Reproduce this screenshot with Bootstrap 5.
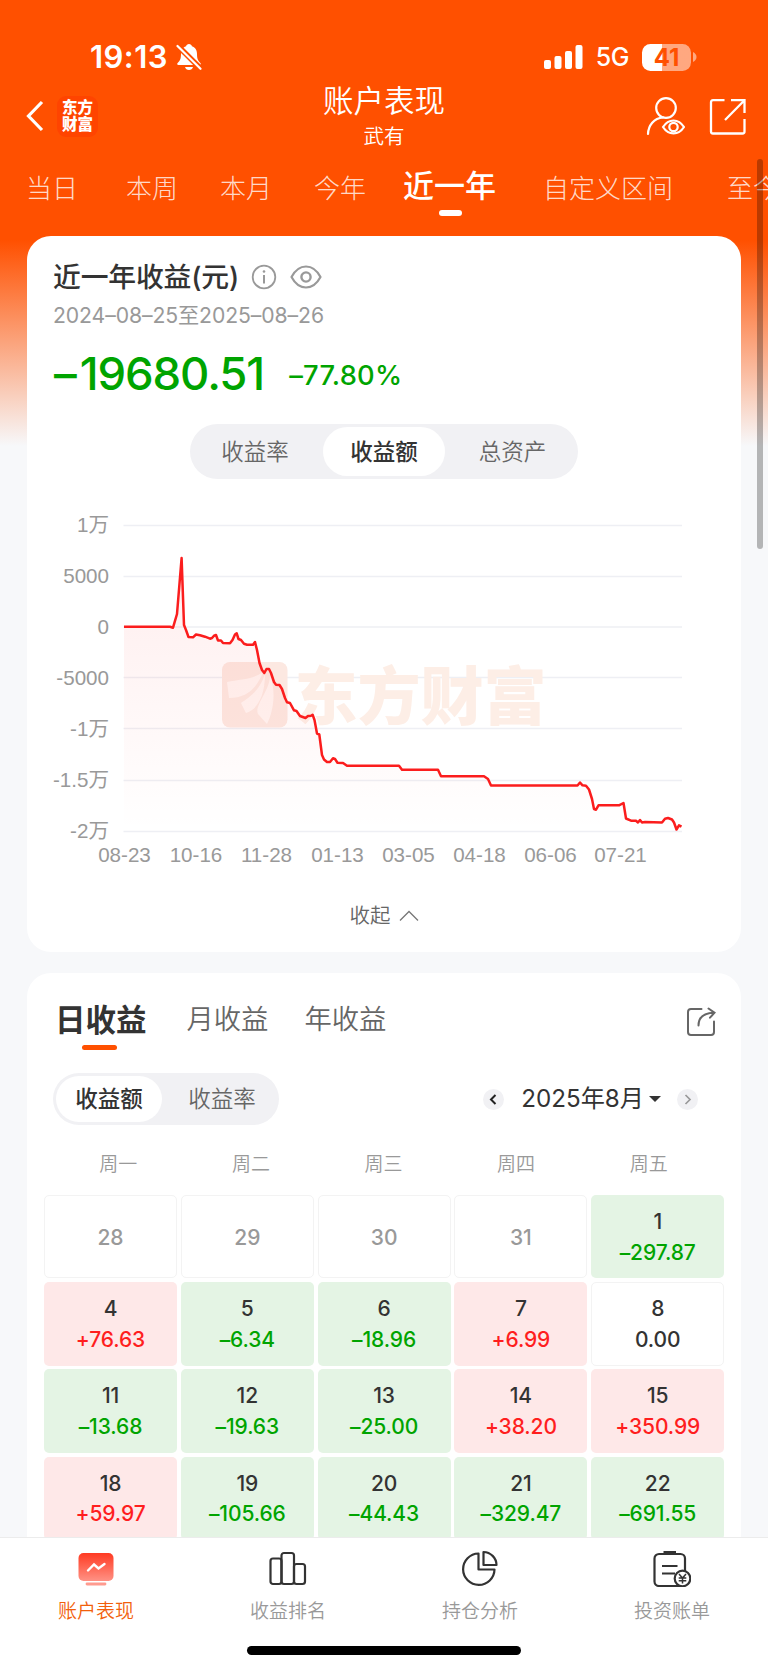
<!DOCTYPE html>
<html lang="zh-CN">
<head>
<meta charset="utf-8">
<meta name="viewport" content="width=device-width, initial-scale=1">
<title>账户表现</title>
<link href="https://cdn.jsdelivr.net/npm/bootstrap@5.3.0/dist/css/bootstrap.min.css" rel="stylesheet">
<style>
:root{--brand:#ff5000;--ink:#333;--mid:#666;--soft:#999;--up:#ff1e1e;--down:#00a400}
body{font-family:Inter,"Noto Sans CJK SC",sans-serif;color:var(--ink);background:#f7f8fa;font-weight:350}
svg{display:block;flex:none}
.app{width:768px;height:1669px;background:linear-gradient(#ff5000 0,#ff5000 240px,#f7f8fa 446px)}
.status{height:80px;padding:34px 71px 0 90px}
.clock{font-size:31px;font-weight:600;line-height:46px;letter-spacing:.45px}
.net{font-size:25px;font-weight:450;line-height:46px;letter-spacing:-.4px}
.batt{width:49px;height:27px;border-radius:8.5px;background:linear-gradient(90deg,#fff 41%,rgba(255,255,255,.5) 41%);color:var(--brand);font-size:24px;font-weight:700;line-height:27px}
.topbar{height:72px;padding:0 22px 0 25px}
.logo{width:41px;height:41px;border-radius:9px;background:#ff4400;font-size:15.5px;line-height:17.2px;font-weight:900;margin-left:13px}
.ttl{font-size:30.5px;line-height:38px;font-weight:350}
.sub{font-size:20.5px;line-height:26px;margin-top:4px}
.ranges{height:84px;padding-left:26px;font-size:26px;line-height:74px;color:rgba(255,255,255,.8);font-weight:300}
.ranges .on{color:#fff;font-size:31px;font-weight:500;line-height:67px}
.ranges .on::after{content:"";position:absolute;left:36px;top:58px;width:23px;height:6px;border-radius:3px;background:#fff}
.panel{margin:0 27px;background:#fff;border-radius:24px}
.p1{height:716px;padding:22px 26px 0}
.h-main{font-size:27.8px;line-height:38px;font-weight:500;letter-spacing:-.15px}
.dates{font-size:21.2px;line-height:30px;color:var(--soft);margin-top:4px;font-weight:400;letter-spacing:-.1px}
.big{font-size:45.5px;line-height:56px;font-weight:500;letter-spacing:-1.1px;margin-left:1px}
.big i{font-style:normal;margin-right:4px}
.pct{font-size:27.3px;line-height:60px;font-weight:450;margin-left:25px;letter-spacing:.25px}
.seg{background:#f1f1f4;border-radius:28px;padding:3px;font-size:22.5px;color:var(--mid)}
.seg span{text-align:center;border-radius:25px}
.seg .on{background:#fff;color:var(--ink);font-weight:500}
.seg1{width:388px;height:55px;margin:18px auto 0;line-height:49px}
.seg1 span{width:130px}.seg1 .on{width:122px}
.seg1 span:first-child{padding-right:6px}.seg1 span:last-child{padding-left:5px}
.seg2{width:226px;height:52px;line-height:45px}
.seg2 .on{width:106px}.seg2 .off{width:114px;padding-left:6px}
.axis{font:20.6px "Liberation Sans","Noto Sans CJK SC",sans-serif;fill:#999}
.wm{font:900 63px "Noto Sans CJK SC",sans-serif;fill:#fdeee6}
.fold{font-size:20.5px;line-height:30px;color:var(--mid);margin-top:6px}
.p2{margin-top:21px;height:800px;padding:0 17px}
.kinds{height:100px;padding:0 8px 6px 11px;line-height:94px;font-size:27.3px;color:var(--mid)}
.kinds .on{font-size:30.5px;font-weight:700;color:var(--ink)}
.kinds .on::after{content:"";position:absolute;left:27px;top:72px;width:35px;height:5px;border-radius:3px;background:var(--brand)}
.ctrl{padding:0 26px 0 9px;height:52px}
.rnd{width:21px;height:21px;border-radius:50%;background:#f1f1f4}
.month{font-size:24.2px;line-height:52px;margin-left:17px;font-weight:370}
.caret{border:6px solid transparent;border-top-color:var(--ink);border-bottom:0;margin:0 16px 0 5px}
.week{padding:0 9px 0 8px;height:70px;line-height:79px;font-size:19px;color:var(--soft);text-align:center}
.days{display:grid;grid-template-columns:repeat(5,133px);gap:3.8px;grid-auto-rows:83.4px;font-size:21px;font-weight:500}
.day{border-radius:5px;text-align:center;padding-top:12px;line-height:30.5px;letter-spacing:-.1px}
.day b{display:block;font-weight:500}
.out{border:1px solid #f3f3f3;line-height:59px;color:var(--soft)}
.zero{border:1px solid #f3f3f3;padding-top:11px}
.gain{background:#fee8e8}.gain b{color:var(--up)}
.loss{background:#e4f4e4}.loss b{color:var(--down)}
.tabs{height:132px;background:#fff;border-top:1px solid #ececec;width:768px}
.tabs .item{width:192px;padding-top:11px;font-size:19px;line-height:28px;color:var(--soft)}
.tabs .item svg{margin:0 auto 11px}
.tabs .on{color:#f25f0c}
.homebar{width:274px;height:9px;border-radius:5px;background:#000;bottom:14px;left:247px}
.scroller{left:757px;top:159px;width:6px;height:390px;border-radius:3px;background:rgba(0,0,0,.27)}
</style>
</head>
<body>
<div class="app position-relative overflow-hidden">
  <header class="text-white">
    <div class="status d-flex align-items-center">
      <span class="clock">19:13</span>
      <svg class="ms-2" width="26" height="28" viewBox="0 0 26 28"><path fill="#fff" d="M13 1c-1.600 0-2.600 1-2.900 2.200C6.500 4.400 5 7.500 5 11c0 6-1.600 7-3.600 9.300-.5.900 0 1.700 1 1.700h21.200c1 0 1.500-.8 1-1.700C22.600 18 21 17 21 11c0-3.500-1.500-6.600-5.100-7.800C15.600 2 14.600 1 13 1zM9 24h8c-.5 2-2 3-4 3s-3.500-1-4-3z"/><path d="M0 1L26 27" stroke="#ff5000" stroke-width="5.500"/><path d="M1.500 3L24.500 25.800" stroke="#fff" stroke-width="2.200" stroke-linecap="round"/></svg>
      <svg class="ms-auto" width="39" height="26" viewBox="0 0 39 26" fill="#fff"><rect y="16" width="7" height="9" rx="2"/><rect x="10.500" y="12" width="7" height="13" rx="2"/><rect x="21" y="7" width="7" height="18" rx="2"/><rect x="31.500" y="1" width="7" height="24" rx="2"/></svg>
      <span class="net" style="margin-left:13px">5G</span>
      <span class="batt text-center" style="margin-left:13px">41</span>
      <svg style="margin-left:2px" width="4" height="10"><path d="M0 0Q3.500 2 3.500 5T0 10z" fill="#fff" opacity=".5"/></svg>
    </div>
    <div class="topbar d-flex align-items-center position-relative">
      <svg width="19" height="32" viewBox="0 0 19 32"><path d="M17 2L3.500 16 17 30" fill="none" stroke="#fff" stroke-width="3.200"/></svg>
      <div class="logo text-center d-flex flex-column justify-content-center"><span>东方</span><span>财富</span></div>
      <div class="position-absolute start-50 translate-middle-x top-0 text-center pt-1 text-nowrap" style="margin-top:-2px">
        <div class="ttl">账户表现</div><div class="sub">武有</div>
      </div>
      <svg class="ms-auto" width="40" height="40" viewBox="0 0 40 40" fill="none" stroke="#fff" stroke-width="2.200"><circle cx="21" cy="12" r="9.800"/><path d="M3 38C3.300 29.500 9 22.200 18 21.300" stroke-linecap="round"/><path d="M18 31C23.500 22.300 33.500 22.300 39 31 33.500 39.600 23.500 39.600 18 31z"/><circle cx="28.500" cy="31" r="4.200"/></svg>
      <svg style="margin-left:24px" width="37" height="37" viewBox="0 0 37 37" fill="none" stroke="#fff" stroke-width="2.300"><path d="M15.500 2.200H4Q2 2.200 2 4.200V33.500Q2 35.500 4 35.500H33.500Q35.500 35.500 35.500 33.500V21M22 2.200H35.500V15M35 2.700L16 22"/></svg>
    </div>
    <nav class="ranges d-flex text-nowrap">
      <span>当日</span><span style="margin-left:48px">本周</span><span style="margin-left:42px">本月</span><span style="margin-left:42px">今年</span><span class="on position-relative" style="margin-left:37px">近一年</span><span style="margin-left:47px">自定义区间</span><span style="margin-left:54px">至今</span>
    </nav>
  </header>

  <section class="panel p1">
    <div class="d-flex align-items-center">
      <span class="h-main">近一年收益(元)</span>
      <svg style="margin-left:12px" width="26" height="26" viewBox="0 0 26 26" fill="none" stroke="#999" stroke-width="1.800"><circle cx="13" cy="13" r="11.300"/><path d="M13 11v8.500" stroke-width="2"/><circle cx="13" cy="7.500" r="1.300" fill="#999" stroke="none"/></svg>
      <svg style="margin-left:13px" width="32" height="26" viewBox="0 0 32 26" fill="none" stroke="#999" stroke-width="2.200"><path d="M1.500 13C9 -1 23 -1 30.500 13 23 27 9 27 1.500 13z" stroke-linejoin="round"/><circle cx="16" cy="13" r="4.600" stroke-width="2.400"/></svg>
    </div>
    <div class="dates">2024–08–25至2025–08–26</div>
    <div class="d-flex" style="color:var(--down);margin-top:16px"><span class="big"><i>–</i>19680.51</span><span class="pct">–77.80%</span></div>
    <div class="seg seg1 d-flex"><span>收益率</span><span class="on">收益额</span><span>总资产</span></div>
    <svg style="margin:16px 0 0 -13px" width="660" height="400" viewBox="40 495 660 400">
      <defs>
        <linearGradient id="fade" x1="0" y1="620" x2="0" y2="831" gradientUnits="userSpaceOnUse"><stop stop-color="#ff1e1e" stop-opacity=".06"/><stop offset="1" stop-color="#ff1e1e" stop-opacity="0"/></linearGradient>
      </defs>
      <path d="M123.500 525.500H682M123.500 576.500H682M123.500 627H682M123.500 677.500H682M123.500 728.500H682M123.500 780.500H682M123.500 831.500H682" stroke="#eeeff4" stroke-width="1.300"/>
      <rect x="222" y="662" width="65.500" height="65.500" rx="8" fill="#fce8e1"/>
      <path fill="#fff5f2" d="M227 682C240 679 252 680 263 672 257 688 247 698 229 698zM265 674C259 692 248 698 241 703L246 713C256 710 265 698 265 674zM270 676C270 690 254 706 258 714L267 724C274 710 276 690 270 676z"/>
      <text class="wm" x="294.500" y="718.500">东方财富</text>
      <path id="area" fill="url(#fade)"/>
      <path id="line" fill="none" stroke="#fb1d1d" stroke-width="2.500" stroke-linejoin="round"/>
      <g class="axis" text-anchor="end"><text x="109" y="531.500">1万</text><text x="109" y="582.500">5000</text><text x="109" y="633.500">0</text><text x="109" y="684.500">-5000</text><text x="109" y="735.500">-1万</text><text x="109" y="786.500">-1.5万</text><text x="109" y="837.500">-2万</text></g>
      <g class="axis" text-anchor="middle"><text x="124.500" y="862">08-23</text><text x="196" y="862">10-16</text><text x="266.500" y="862">11-28</text><text x="337.500" y="862">01-13</text><text x="408.500" y="862">03-05</text><text x="479.500" y="862">04-18</text><text x="550.500" y="862">06-06</text><text x="620.500" y="862">07-21</text></g>
    </svg>
    <div class="fold d-flex justify-content-center align-items-center">收起<svg style="margin-left:8px" width="20" height="12" viewBox="0 0 20 12"><path d="M1 10.500L10 1.500 19 10.500" fill="none" stroke="#777" stroke-width="1.300"/></svg></div>
  </section>

  <section class="panel p2">
    <div class="kinds d-flex align-items-center"><span class="on position-relative">日收益</span><span style="margin-left:40px">月收益</span><span style="margin-left:36px">年收益</span>
      <svg class="ms-auto" style="margin-top:3px" width="30" height="30" viewBox="0 0 30 30" fill="none" stroke="#666" stroke-width="2" stroke-linecap="round"><path d="M15.500 2H5Q2 2 2 5V25Q2 28 5 28H25Q28 28 28 25V14.500M12.500 18.500C12.500 10 18 6 28 5.700M22.500 1.500L28.500 5.700 24 10.700"/></svg>
    </div>
    <div class="ctrl d-flex align-items-center">
      <div class="seg seg2 d-flex"><span class="on">收益额</span><span class="off">收益率</span></div>
      <span class="rnd ms-auto"><svg width="21" height="21"><path d="M12.500 6L8 10.500l4.500 4.500" fill="none" stroke="#222" stroke-width="2"/></svg></span>
      <span class="month">2025年8月</span><span class="caret"></span>
      <span class="rnd"><svg width="21" height="21"><path d="M8.500 6l4.500 4.500L8.500 15" fill="none" stroke="#999" stroke-width="1.700"/></svg></span>
    </div>
    <div class="week d-flex"><span class="col">周一</span><span class="col">周二</span><span class="col">周三</span><span class="col">周四</span><span class="col">周五</span></div>
    <div class="days">
      <div class="day out">28</div><div class="day out">29</div><div class="day out">30</div><div class="day out">31</div><div class="day loss">1<b>–297.87</b></div>
      <div class="day gain">4<b>+76.63</b></div><div class="day loss">5<b>–6.34</b></div><div class="day loss">6<b>–18.96</b></div><div class="day gain">7<b>+6.99</b></div><div class="day zero">8<b>0.00</b></div>
      <div class="day loss">11<b>–13.68</b></div><div class="day loss">12<b>–19.63</b></div><div class="day loss">13<b>–25.00</b></div><div class="day gain">14<b>+38.20</b></div><div class="day gain">15<b>+350.99</b></div>
      <div class="day gain">18<b>+59.97</b></div><div class="day loss">19<b>–105.66</b></div><div class="day loss">20<b>–44.43</b></div><div class="day loss">21<b>–329.47</b></div><div class="day loss">22<b>–691.55</b></div>
    </div>
  </section>

  <nav class="tabs d-flex text-center position-absolute bottom-0 start-0">
    <div class="item on"><svg width="38" height="38" viewBox="0 0 38 38"><defs><linearGradient id="scr" x2="0" y2="1"><stop stop-color="#ff3a22"/><stop offset="1" stop-color="#ff9285"/></linearGradient></defs><rect x="1.500" y="4" width="35" height="28" rx="5" fill="url(#scr)"/><path d="M11 21.500L17 15.500 21.500 19.500 27.500 15" fill="none" stroke="#fff" stroke-width="2.400" stroke-linecap="round"/><path d="M10 35H28" stroke="#ff9b8f" stroke-width="2.800" stroke-linecap="round"/></svg>账户表现</div>
    <div class="item"><svg width="38" height="38" viewBox="0 0 38 38" fill="none" stroke="#333" stroke-width="2.200"><rect x="1.500" y="9.500" width="11" height="25.500" rx="2.500"/><rect x="12.500" y="4" width="12.500" height="31" rx="2.500"/><rect x="25" y="15" width="11" height="20" rx="2.500"/></svg>收益排名</div>
    <div class="item"><svg width="38" height="38" viewBox="0 0 38 38" fill="none" stroke="#333" stroke-width="2.200" stroke-linejoin="round"><path d="M17.500 4.500V20.500H33.500A15.700 15.700 0 1 1 17.500 4.500z"/><path d="M22.500 3V16H35.500A13.200 13.200 0 0 0 22.500 3z"/></svg>持仓分析</div>
    <div class="item"><svg width="38" height="38" viewBox="0 0 38 38" fill="none" stroke="#333" stroke-width="2.200"><rect x="1.500" y="5" width="30.500" height="32" rx="4.500"/><path d="M10.500 3.500H23" stroke-width="3"/><path d="M9 17H24.500M9 24.500H22" stroke-width="2"/><circle cx="29.500" cy="29.500" r="7.800" fill="#fff"/><path d="M26 25l3.500 4 3.500-4M29.500 29v5.500M25.700 29h7.600M25.700 31.800h7.600" stroke-width="1.500"/></svg>投资账单</div>
    <div class="homebar position-absolute"></div>
  </nav>
  <div class="scroller position-absolute"></div>
</div>
<script src="https://cdn.jsdelivr.net/npm/bootstrap@5.3.0/dist/js/bootstrap.bundle.min.js"></script>
<script>
// Cumulative profit curve, in chart coordinates
const pts = [[124,626.7],[170,626.7],[173,627.7],[177,614],[181.600,558],[184,625],[186,630],[188.500,637],[193,637.300],[196,634.500],[200,635.300],[205,636.700],[210,638.700],[212,638],[214,635.700],[216,635],[218,640.500],[221,640.500],[223,643],[230,643.300],[232.500,640],[235,634.500],[236.700,633.300],[238.500,639],[241,640],[244,643.700],[247,644.700],[253,644.700],[255,642],[257,650],[259.500,663],[262,670],[264.300,673],[266.500,669],[269,669],[271,673],[274,682],[276,684.700],[279.500,685],[282,689],[285,698],[287,702.300],[290,703],[294,710.300],[296.500,711],[300,716],[305.500,718],[308,716],[311,715.700],[312.600,714.700],[314.500,720],[317,733.500],[319.300,734.500],[322,755],[324,759.500],[327,762],[330,762],[333,758.300],[335,759],[337.500,762.700],[343,763],[347,765.700],[399,765.700],[402,769.700],[438,769.700],[441,776.300],[484,776.300],[488,779],[491,785.500],[577.500,785.500],[580,782.500],[582.500,785.300],[586,785.700],[589,789.500],[592,799],[594,809],[596,809.700],[598.500,805.300],[619,805.300],[623.500,803],[626,818.500],[631,820.700],[636,820.700],[638,822.500],[640,820],[642,822.500],[645,822],[662,822.500],[665,818.700],[668,818],[672,819.500],[674,822.500],[676.500,829.500],[679,825.300],[681.500,826.700]];
const d = 'M' + pts.map(p => p.join(' ')).join('L');
document.getElementById('line').setAttribute('d', d);
document.getElementById('area').setAttribute('d', d + 'V831H124Z');
</script>
</body>
</html>
